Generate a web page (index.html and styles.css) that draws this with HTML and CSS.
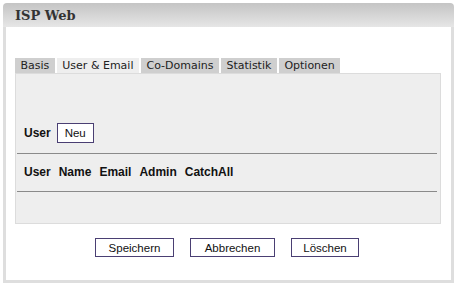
FILE: index.html
```html
<!DOCTYPE html>
<html lang="de">
<head>
  <meta charset="UTF-8">
  <title>ISP Web</title>
  <link rel="stylesheet" href="styles.css">
</head>
<body>
  <div class="fenster">
    <div class="kopf">ISP Web</div>
    <div class="inhalt">
      <ul class="reiter">
        <li>Basis</li>
        <li class="aktiv">User &amp; Email</li>
        <li>Co-Domains</li>
        <li>Statistik</li>
        <li>Optionen</li>
      </ul>
      <div class="panel">
        <div class="zeile">
          <b>User</b>
          <button class="knopf klein">Neu</button>
        </div>
        <hr>
        <table class="liste">
          <tr><th>User</th><th>Name</th><th>Email</th><th>Admin</th><th>CatchAll</th></tr>
        </table>
        <hr>
      </div>
      <div class="aktionen">
        <button class="knopf speichern">Speichern</button>
        <button class="knopf abbrechen">Abbrechen</button>
        <button class="knopf loeschen">Löschen</button>
      </div>
    </div>
  </div>
</body>
</html>
```

FILE: styles.css
```css
* {
  box-sizing: border-box;
}
body {
  margin: 0;
  padding: 3px 3px 0 3px;
  background: #fff;
  font-family: "Liberation Sans", Arial, sans-serif;
}
.fenster {
  width: 451px;
}
.kopf {
  height: 24px;
  line-height: 25px;
  padding-left: 12px;
  font-family: "DejaVu Serif", "Liberation Serif", serif;
  font-weight: bold;
  font-size: 13px;
  color: #333;
  background: linear-gradient(#c4c4c4, #e6e6e6);
  border-radius: 4px 4px 0 0;
}
.inhalt {
  height: 256px;
  border: 3px solid #dedede;
  border-top: none;
  padding: 31px 0 0 9px;
}
.reiter {
  list-style: none;
  margin: 0;
  padding: 0;
  display: flex;
  gap: 2px;
  font-family: "DejaVu Sans", Verdana, sans-serif;
  font-size: 11px;
  color: #222;
}
.reiter li {
  background: #cfcfcf;
  height: 15px;
  line-height: 16px;
  padding: 0 5.5px;
}
.reiter li.aktiv {
  background: #eeeeee;
}
.panel {
  width: 426px;
  height: 151px;
  background: #eeeeee;
  border: 1px solid #dcdcdc;
  padding: 49px 0 0 0;
}
.zeile {
  display: flex;
  align-items: center;
  gap: 6px;
  padding-left: 8px;
  font-size: 12px;
  color: #111;
}
.panel hr {
  margin: 10px 3px 0 1px;
  border: none;
  border-top: 1px solid #8a8a8a;
  height: 0;
}
.liste {
  border-collapse: collapse;
  margin: 9px 0 9px 6px;
}
.liste th {
  font-size: 12px;
  color: #111;
  padding: 0 2px;
  text-align: left;
  height: 18px;
}
.liste th + th {
  padding-left: 6px;
}
.knopf {
  background: #fff;
  border: 1px solid #4a3f73;
  font-family: "Liberation Sans", Tahoma, sans-serif;
  font-size: 11.5px;
  color: #111;
  height: 19px;
  padding: 0;
}
.klein {
  width: 37px;
  height: 20px;
}
.aktionen {
  display: flex;
  justify-content: center;
  gap: 16px;
  margin-top: 14px;
  padding-right: 12px;
}
.speichern { width: 79px; }
.abbrechen { width: 85px; }
.loeschen { width: 68px; }
```
